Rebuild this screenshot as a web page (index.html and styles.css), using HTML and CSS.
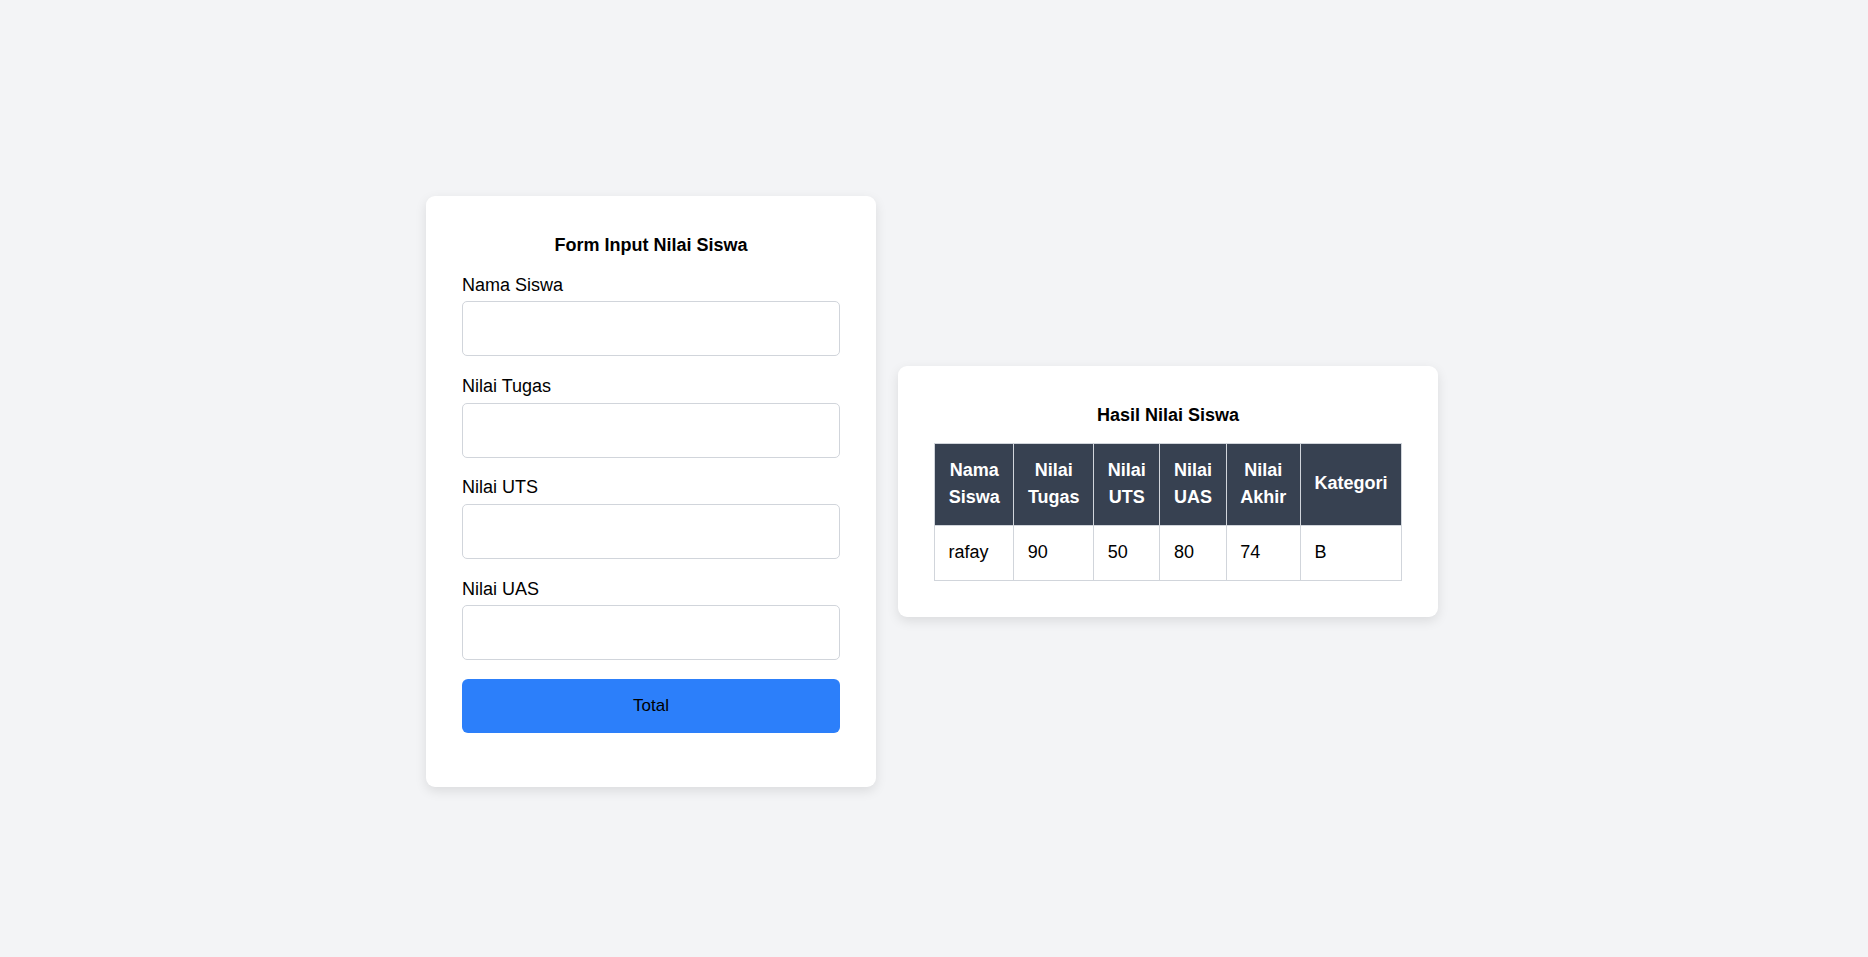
FILE: index.html
```html
<!DOCTYPE html>
<html lang="id">
<head>
<meta charset="utf-8">
<title>Nilai Siswa</title>
<link rel="stylesheet" href="styles.css">
</head>
<body>
<main class="page">
  <section class="card form-card">
    <h2 class="card-title">Form Input Nilai Siswa</h2>
    <form class="form">
      <div class="field">
        <label class="label" for="nama">Nama Siswa</label>
        <input class="input" id="nama" type="text">
      </div>
      <div class="field">
        <label class="label" for="tugas">Nilai Tugas</label>
        <input class="input" id="tugas" type="number">
      </div>
      <div class="field">
        <label class="label" for="uts">Nilai UTS</label>
        <input class="input" id="uts" type="number">
      </div>
      <div class="field field-last">
        <label class="label" for="uas">Nilai UAS</label>
        <input class="input" id="uas" type="number">
      </div>
      <button class="btn" type="button">Total</button>
    </form>
  </section>
  <section class="card result-card">
    <h2 class="card-title">Hasil Nilai Siswa</h2>
    <table class="table">
      <thead>
        <tr>
          <th>Nama Siswa</th>
          <th>Nilai Tugas</th>
          <th>Nilai UTS</th>
          <th>Nilai UAS</th>
          <th>Nilai Akhir</th>
          <th>Kategori</th>
        </tr>
      </thead>
      <tbody>
        <tr>
          <td>rafay</td>
          <td>90</td>
          <td>50</td>
          <td>80</td>
          <td>74</td>
          <td>B</td>
        </tr>
      </tbody>
    </table>
  </section>
</main>
</body>
</html>
```
FILE: styles.css
```css
* { box-sizing: border-box; }
html, body { margin: 0; padding: 0; }
body {
  background: #f3f4f6;
  font-family: "Liberation Sans", Arial, sans-serif;
  font-size: 18px;
  color: #000;
}
.page {
  min-height: 100vh;
  display: flex;
  justify-content: center;
  align-items: center;
  gap: 22px;
  padding: 26px 4px 0 0;
}
.card {
  background: #fff;
  border-radius: 9px;
  padding: 36px;
  box-shadow: 0 4px 12px rgba(0, 0, 0, 0.1);
}
.form-card { width: 450px; }
.result-card { width: 540px; }
.card-title {
  margin: 3px 0 17px;
  font-size: 18px;
  font-weight: bold;
  text-align: center;
  line-height: normal;
}
.form-card .card-title { margin-bottom: 18.5px; }
.form { margin: 0 0 18px; }
.field { margin-bottom: 19.8px; }
.field-last { margin-bottom: 18.6px; }
.label {
  display: block;
  margin-bottom: 5.5px;
  line-height: normal;
}
.input {
  display: block;
  width: 100%;
  height: 55px;
  border: 1px solid #d1d5db;
  border-radius: 5px;
  background: #fff;
  font-family: inherit;
  font-size: 18px;
  padding: 0 12px;
}
.btn {
  display: block;
  width: 100%;
  height: 54px;
  border: none;
  border-radius: 6px;
  background: #2c7ffa;
  color: #000;
  font-family: inherit;
  font-size: 17px;
}
.table {
  width: 100%;
  border-collapse: collapse;
  line-height: 1.5;
}
.table th, .table td {
  border: 1px solid #d1d5db;
  padding: 13.5px 13.5px;
}
.table th {
  background: #374151;
  color: #fff;
  font-weight: bold;
  text-align: center;
  padding-top: 12.5px;
  padding-bottom: 14px;
}
.table td { text-align: left; }
```
